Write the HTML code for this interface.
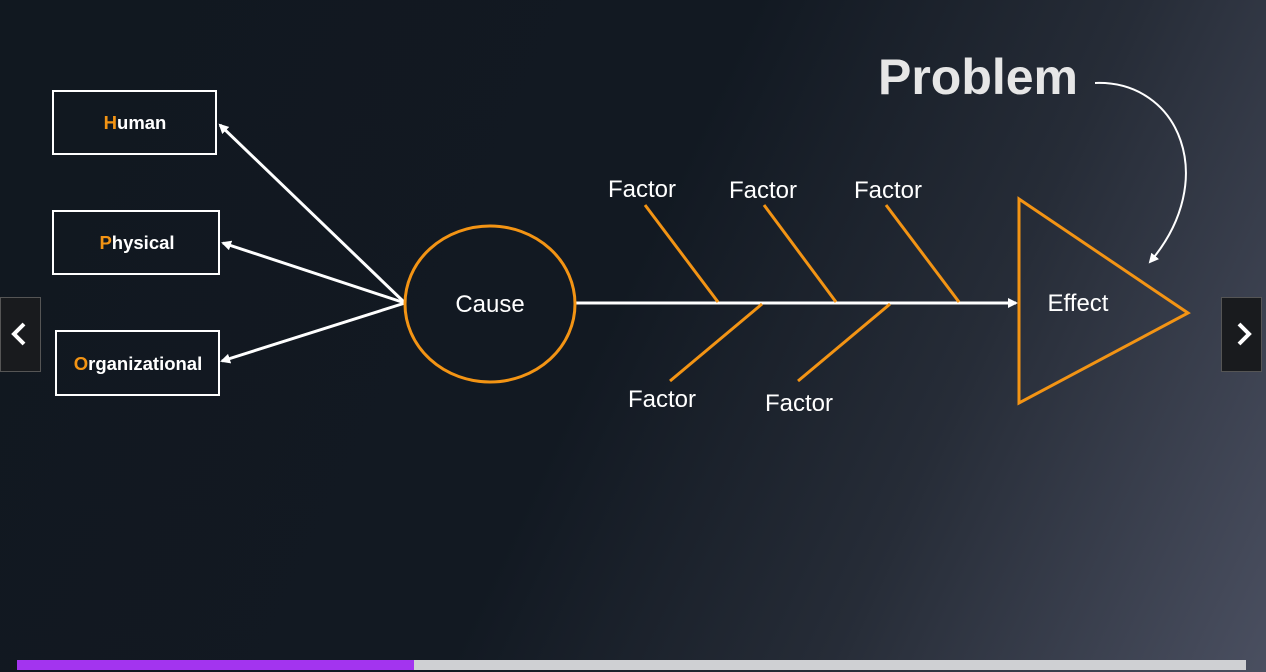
<!DOCTYPE html>
<html><head><meta charset="utf-8"><style>
html,body{margin:0;padding:0;}
body{width:1266px;height:672px;overflow:hidden;position:relative;font-family:"Liberation Sans",sans-serif;
background:linear-gradient(115deg,#111820 0%,#121922 48%,#262c37 72%,#4a4f60 100%);}
svg{position:absolute;left:0;top:0;}
.nav{position:absolute;top:297px;width:41px;height:75px;background:#191b1e;border:1px solid #555;box-sizing:border-box;}
.bar{position:absolute;top:660px;height:10px;}
</style></head><body>
<svg width="1266" height="672" viewBox="0 0 1266 672">
<defs>
<marker id="a" markerWidth="10" markerHeight="10" refX="8" refY="5" orient="auto" markerUnits="userSpaceOnUse">
<path d="M0,0 L10,5 L0,10 Z" fill="#fff"/></marker>
</defs>
<g fill="none" stroke="#fff" stroke-width="2">
<rect x="53" y="91" width="163" height="63"/>
<rect x="53" y="211" width="166" height="63"/>
<rect x="56" y="331" width="163" height="64"/>
</g>
<g font-size="18.5" font-weight="bold" fill="#fff" text-anchor="middle">
<text x="135" y="129"><tspan fill="#f39414">H</tspan>uman</text>
<text x="137" y="249"><tspan fill="#f39414">P</tspan>hysical</text>
<text x="138" y="370"><tspan fill="#f39414">O</tspan>rganizational</text>
</g>
<g stroke="#fff" stroke-width="3" fill="none">
<line x1="405" y1="303" x2="220" y2="125" marker-end="url(#a)"/>
<line x1="405" y1="303" x2="223" y2="243" marker-end="url(#a)"/>
<line x1="405" y1="303" x2="222" y2="361" marker-end="url(#a)"/>
<line x1="576" y1="303" x2="1016" y2="303" marker-end="url(#a)"/>
<path d="M1095,83 C1180,80 1220,180 1150,262" stroke-width="2" marker-end="url(#a)"/>
</g>
<ellipse cx="490" cy="304" rx="85" ry="78" fill="none" stroke="#f39414" stroke-width="3"/>
<polygon points="1019,199 1188,313 1019,403" fill="none" stroke="#f39414" stroke-width="3"/>
<g stroke="#f39414" stroke-width="3">
<line x1="645" y1="205" x2="718" y2="302"/>
<line x1="764" y1="205" x2="836" y2="302"/>
<line x1="886" y1="205" x2="959" y2="302"/>
<line x1="762" y1="304" x2="670" y2="381"/>
<line x1="890" y1="304" x2="798" y2="381"/>
</g>
<g fill="#fff" font-size="24" text-anchor="middle">
<text x="490" y="312">Cause</text>
<text x="1078" y="311">Effect</text>
<text x="642" y="197">Factor</text>
<text x="763" y="198">Factor</text>
<text x="888" y="198">Factor</text>
<text x="662" y="407">Factor</text>
<text x="799" y="411">Factor</text>
</g>
<text x="978" y="94" fill="#e6e6e6" font-size="50" font-weight="bold" text-anchor="middle">Problem</text>
</svg>
<div class="nav" style="left:0"></div>
<div class="nav" style="left:1221px"></div>
<svg width="1266" height="672" viewBox="0 0 1266 672" style="pointer-events:none">
<path d="M24,324 L14,334 L24,344" stroke="#fff" stroke-width="4" fill="none"/>
<path d="M1239,324 L1249,334 L1239,344" stroke="#fff" stroke-width="4" fill="none"/>
</svg>
<div class="bar" style="left:17px;width:397px;background:#a334ef"></div>
<div class="bar" style="left:414px;width:832px;background:#cfd0d3"></div>
</body></html>
